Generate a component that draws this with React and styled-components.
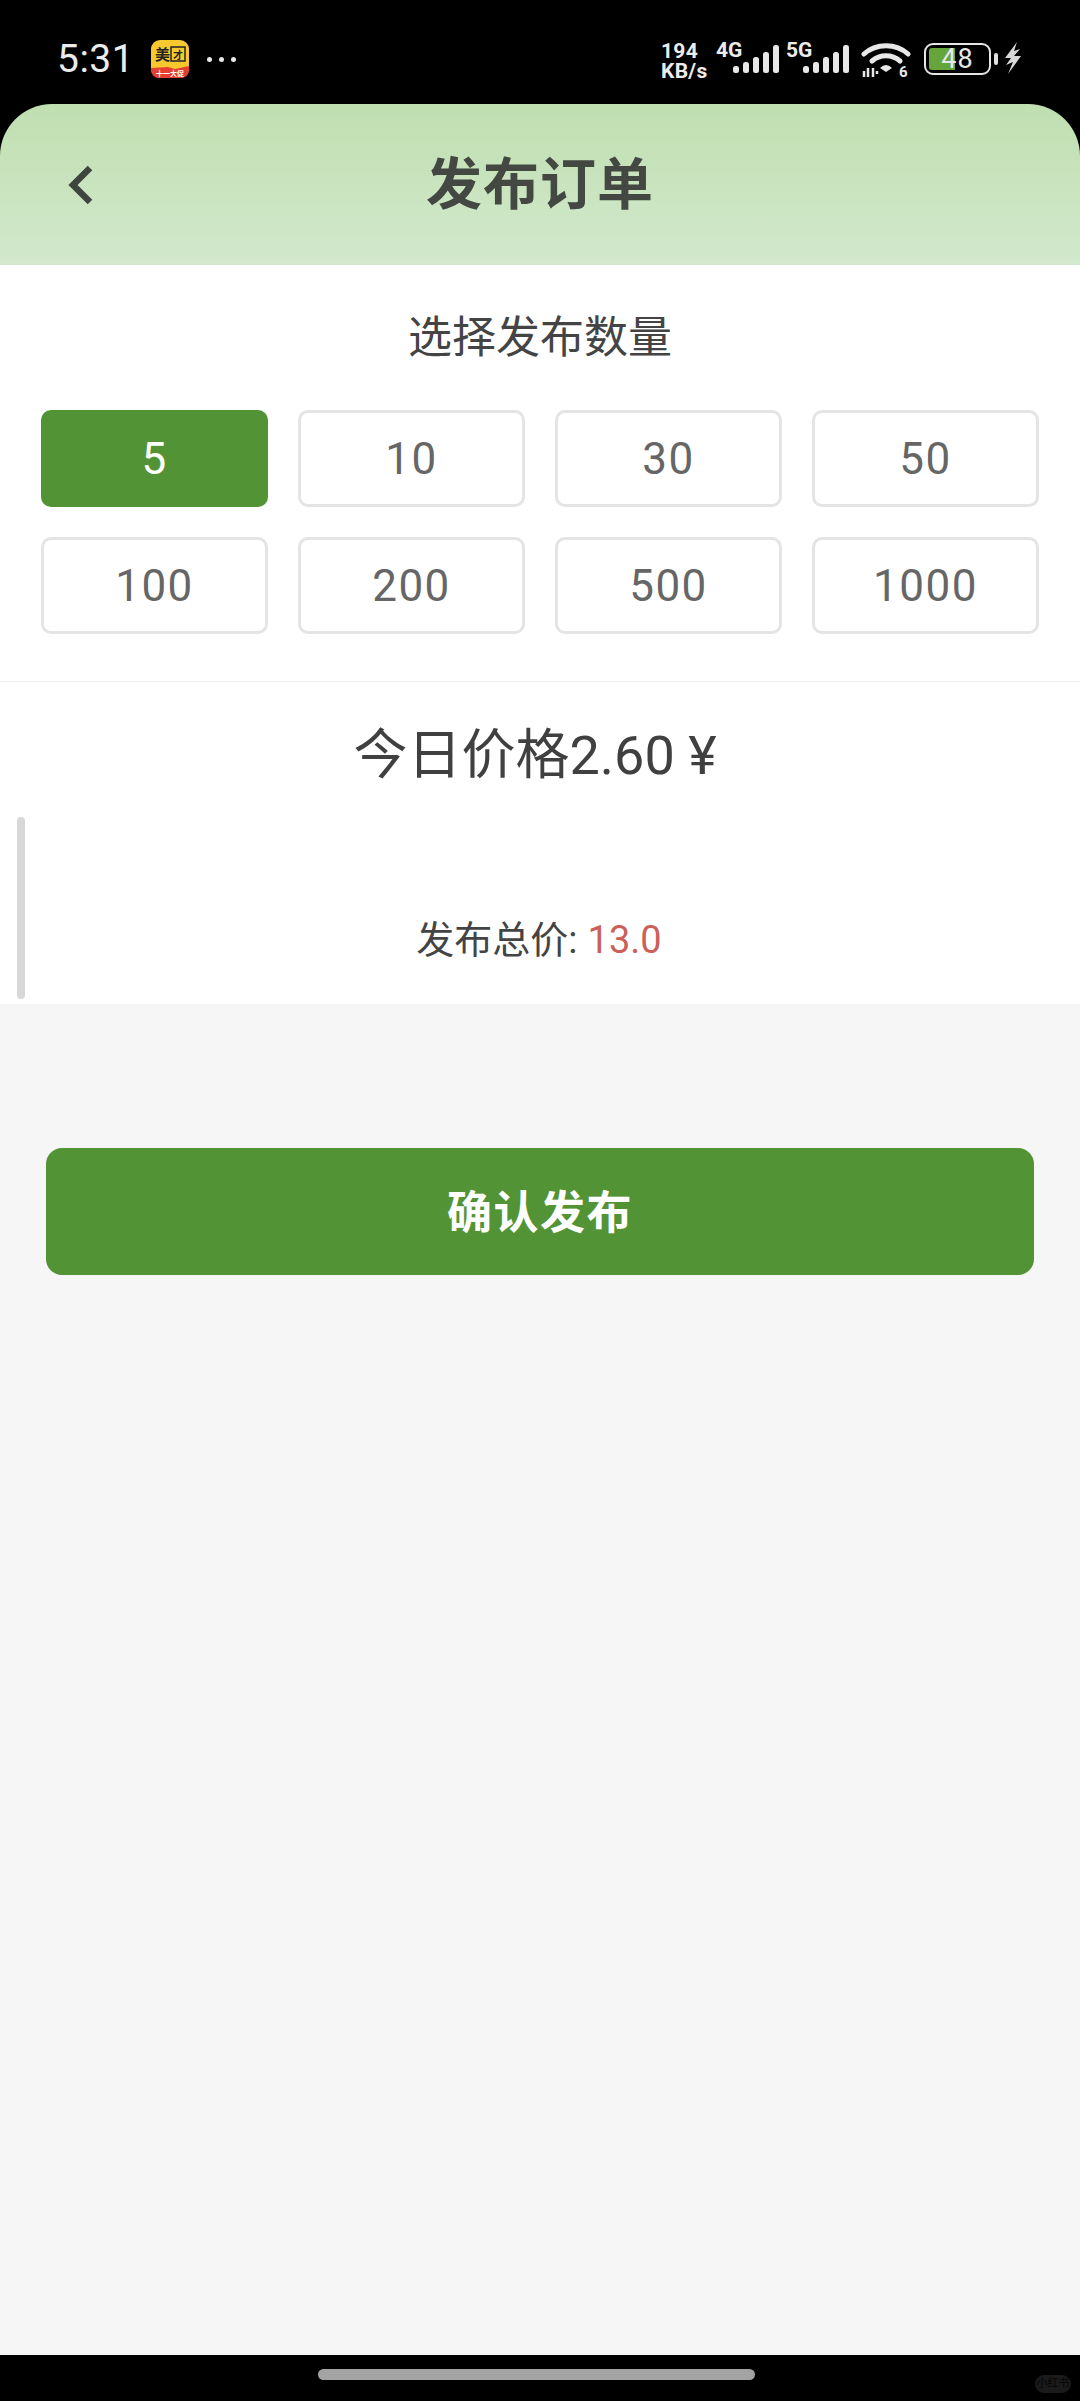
import React from "react";
import styled, { createGlobalStyle } from "styled-components";

const Global = createGlobalStyle`
  html, body { margin: 0; padding: 0; background: #000; }
  * { box-sizing: border-box; }
`;

const FONT = `Roboto, "Noto Sans CJK SC", sans-serif`;

const Page = styled.div`
  width: 1080px;
  height: 2401px;
  display: flex;
  flex-direction: column;
  overflow: hidden;
  background: #000;
  font-family: ${FONT};
`;

const StatusBar = styled.div`
  height: 104px;
  flex: none;
  display: flex;
  align-items: flex-start;
  justify-content: space-between;
  padding: 40px 58px 0 57px;
  color: #ececec;
`;

const StatusLeft = styled.div`
  display: flex;
  align-items: center;
  height: 38px;
`;

const Time = styled.span`
  font-size: 39px;
  line-height: 38px;
  width: 94px;
  letter-spacing: 0.5px;
`;

const Dots = styled.div`
  display: flex;
  gap: 7px;
  margin-left: 18px;
`;

const Dot = styled.i`
  width: 5px;
  height: 5px;
  border-radius: 50%;
  background: #e8e8e8;
`;

const StatusRight = styled.div`
  display: flex;
  align-items: flex-start;
`;

const Speed = styled.div`
  width: 55px;
  font-size: 21px;
  line-height: 20px;
  font-weight: 700;
  margin-top: 1px;
  letter-spacing: 0.3px;
`;

const Net = styled.div`
  position: relative;
  width: 70px;
  height: 38px;
`;

const NetLabel = styled.span`
  position: absolute;
  left: 0;
  top: 0;
  font-size: 21px;
  line-height: 20px;
  font-weight: 700;
`;

const SignalIcon = styled.svg`
  position: absolute;
  left: 17px;
  top: 5px;
`;

const WifiIcon = styled.svg`
  margin-left: 5px;
  flex: none;
`;

const Battery = styled.div`
  position: relative;
  width: 67px;
  height: 32px;
  margin: 3px 0 0 13px;
  border: 2.5px solid #e6e6e6;
  border-radius: 9px;
  display: flex;
  align-items: center;
  justify-content: center;
  font-size: 27px;
  line-height: 27px;
  color: #e8e8e8;
  overflow: hidden;
`;

const BatteryFill = styled.div`
  position: absolute;
  left: 3px;
  top: 3px;
  bottom: 3px;
  width: 26px;
  background: #65a53c;
  border-radius: 3px 0 0 3px;
`;

const BatteryText = styled.span`
  position: relative;
  letter-spacing: 1px;
`;

const BatteryNub = styled.div`
  width: 4px;
  height: 12px;
  margin: 13px 0 0 3px;
  border-radius: 2px;
  background: #e0e0e0;
`;

const BoltIcon = styled.svg`
  margin: 2px 0 0 6px;
  flex: none;
`;

const Header = styled.header`
  height: 161px;
  flex: none;
  position: relative;
  display: flex;
  align-items: center;
  justify-content: center;
  border-radius: 52px 52px 0 0;
  background: linear-gradient(180deg, #bfdfb0 0%, #d3e8cc 100%);
`;

const BackIcon = styled.svg`
  position: absolute;
  left: 66px;
  top: 60px;
`;

const HeaderTitle = styled.h1`
  margin: 0;
  font-size: 56px;
  font-weight: 700;
  line-height: 1;
  color: #434843;
  letter-spacing: 1px;
`;

const Main = styled.main`
  flex: 1;
  background: #f6f6f6;
  display: flex;
  flex-direction: column;
`;

const Card = styled.section`
  position: relative;
  height: 739px;
  flex: none;
  background: #fff;
`;

const SectionTitle = styled.div`
  height: 145px;
  padding-bottom: 7px;
  display: flex;
  align-items: center;
  justify-content: center;
  font-size: 44px;
  color: #444;
`;

const ChipGrid = styled.div`
  display: grid;
  grid-template-columns: repeat(4, 1fr);
  grid-auto-rows: 97px;
  gap: 30px;
  padding: 0 41px 47px;
  border-bottom: 1px solid #f3f3f3;
`;

const Chip = styled.div`
  display: flex;
  align-items: center;
  justify-content: center;
  font-size: 44px;
  letter-spacing: 1.5px;
  border-radius: 10px;
  color: ${(p) => (p.$active ? "#fff" : "#666")};
  background: ${(p) => (p.$active ? "#529335" : "#fff")};
  border: 3px solid ${(p) => (p.$active ? "#529335" : "#e4e4e4")};
`;

const Price = styled.div`
  height: 146px;
  padding: 0 10px 10px 0;
  display: flex;
  align-items: center;
  justify-content: center;
  font-size: 54px;
  color: #404040;
`;

const TotalRow = styled.div`
  height: 176px;
  display: flex;
  align-items: flex-end;
  justify-content: center;
  padding: 0 2px 40px 0;
  font-size: 38px;
  line-height: 48px;
  color: #444;
`;

const TotalValue = styled.span`
  color: #cd5f59;
  margin-left: 10px;
`;

const ScrollThumb = styled.div`
  position: absolute;
  left: 17px;
  top: 552px;
  width: 8px;
  height: 182px;
  border-radius: 4px;
  background: #d8d8d8;
`;

const Confirm = styled.button`
  margin: 144px 46px 0;
  height: 127px;
  padding: 0 0 5px;
  border: none;
  border-radius: 16px;
  background: #529335;
  color: #fff;
  font-family: ${FONT};
  font-size: 45px;
  font-weight: 700;
  letter-spacing: 1.5px;
`;

const BottomBar = styled.footer`
  position: relative;
  height: 46px;
  flex: none;
  background: #000;
  display: flex;
  justify-content: center;
  padding: 14px 8px 0 0;
`;

const HomeHandle = styled.div`
  width: 437px;
  height: 11px;
  border-radius: 6px;
  background: #a3a3a3;
`;

const Watermark = styled.div`
  position: absolute;
  right: 9px;
  top: 20px;
  width: 36px;
  height: 18px;
  border-radius: 9px;
  background: #1a1a1a;
  color: #050505;
  font-size: 11px;
  line-height: 18px;
  text-align: center;
  white-space: nowrap;
`;

const quantities = [5, 10, 30, 50, 100, 200, 500, 1000];

const AppIcon = () => (
  <svg width="38" height="38" viewBox="0 0 38 38">
    <rect width="38" height="38" rx="9" fill="#f8c92f" />
    <path d="M0 28 L17 27 L24 29 L38 26 L38 29 Q38 38 29 38 L9 38 Q0 38 0 29 Z" fill="#e5402f" />
    <text x="4" y="20" fontSize="15" fontWeight="700" fill="#222" fontFamily="Noto Sans CJK SC">美</text>
    <rect x="20" y="7" width="14" height="14" fill="none" stroke="#222" strokeWidth="1.5" />
    <text x="22" y="19" fontSize="10" fontWeight="700" fill="#222" fontFamily="Noto Sans CJK SC">才</text>
    <text x="5" y="36" fontSize="7" fontWeight="700" fill="#fff" fontFamily="Noto Sans CJK SC">十一大促</text>
  </svg>
);

const Signal = () => (
  <SignalIcon width="47" height="30" viewBox="0 0 47 30" fill="#e8e8e8">
    <rect x="0" y="21" width="6" height="7" rx="2.5" />
    <rect x="10" y="17" width="6" height="11" rx="2.5" />
    <rect x="20" y="12" width="6" height="16" rx="2.5" />
    <rect x="30" y="7" width="6" height="21" rx="2.5" />
    <rect x="40" y="0" width="6" height="28" rx="2.5" />
  </SignalIcon>
);

const Wifi = () => (
  <WifiIcon width="50" height="40" viewBox="0 0 50 40" fill="none">
    <path d="M3 14 C15 3 35 3 47 14" stroke="#e8e8e8" strokeWidth="5" strokeLinecap="round" />
    <path d="M11 21 C19 14 31 14 39 21" stroke="#e8e8e8" strokeWidth="5" strokeLinecap="round" />
    <path d="M19 28 Q25 22 31 28 L25 32 Z" fill="#e8e8e8" />
    <path d="M3 31 v6 M7 28 v9 M12 28 v9 M16 31 v3" stroke="#e8e8e8" strokeWidth="2.5" />
    <text x="38" y="37" fontSize="15" fontWeight="700" fill="#e8e8e8" fontFamily="Roboto">6</text>
  </WifiIcon>
);

const Bolt = () => (
  <BoltIcon width="18" height="32" viewBox="0 0 18 32" fill="#d8d8d8">
    <path d="M13 0 L1 16 L7 16 L2 23 L9 20 L4 32 L17 14 L10 14 L16 7 L10 9 Z" />
  </BoltIcon>
);

export default function App() {
  return (
    <Page>
      <Global />
      <StatusBar>
        <StatusLeft>
          <Time>5:31</Time>
          <AppIcon />
          <Dots>
            <Dot />
            <Dot />
            <Dot />
          </Dots>
        </StatusLeft>
        <StatusRight>
          <Speed>
            194
            <br />
            KB/s
          </Speed>
          <Net>
            <NetLabel>4G</NetLabel>
            <Signal />
          </Net>
          <Net>
            <NetLabel>5G</NetLabel>
            <Signal />
          </Net>
          <Wifi />
          <Battery>
            <BatteryFill />
            <BatteryText>48</BatteryText>
          </Battery>
          <BatteryNub />
          <Bolt />
        </StatusRight>
      </StatusBar>
      <Header>
        <BackIcon width="28" height="42" viewBox="0 0 28 42" fill="none">
          <path d="M24 4 L7 21 L24 38" stroke="#3f4640" strokeWidth="6.5" />
        </BackIcon>
        <HeaderTitle>发布订单</HeaderTitle>
      </Header>
      <Main>
        <Card>
          <SectionTitle>选择发布数量</SectionTitle>
          <ChipGrid>
            {quantities.map((q, i) => (
              <Chip key={q} $active={i === 0}>
                {q}
              </Chip>
            ))}
          </ChipGrid>
          <Price>今日价格2.60 ¥</Price>
          <TotalRow>
            发布总价:
            <TotalValue>13.0</TotalValue>
          </TotalRow>
          <ScrollThumb />
        </Card>
        <Confirm>确认发布</Confirm>
      </Main>
      <BottomBar>
        <HomeHandle />
        <Watermark>小红书</Watermark>
      </BottomBar>
    </Page>
  );
}
